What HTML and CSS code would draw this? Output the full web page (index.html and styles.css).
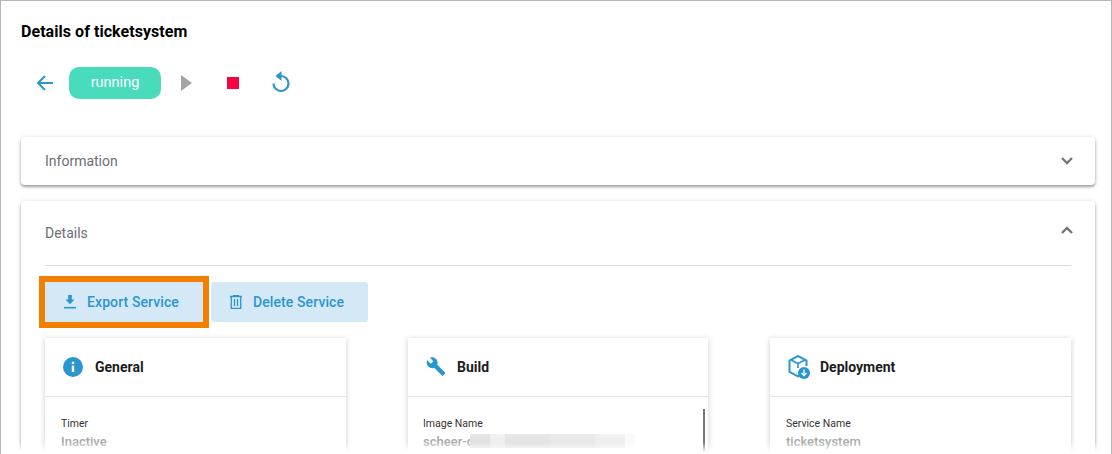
FILE: index.html
```html
<!DOCTYPE html>
<html lang="en">
<head>
<meta charset="utf-8">
<title>Details of ticketsystem</title>
<link rel="stylesheet" href="styles.css">
</head>
<body>
<div class="frame">
  <h1 class="title">Details of ticketsystem</h1>
  <div class="toolbar">
    <svg class="ic-back" viewBox="0 0 18 18" width="18" height="18"><path d="M17 9H2M9 2 2 9l7 7" fill="none" stroke="#2a96d0" stroke-width="2"/></svg>
    <span class="status">running</span>
    <svg class="ic-play" viewBox="0 0 11 16" width="11" height="16"><path d="M0 0l11 8-11 8z" fill="#a3a3a3"/></svg>
    <span class="ic-stop"></span>
    <svg class="ic-reload" viewBox="0 0 18 21" width="18" height="21"><path d="M9 5a7.500 7.500 0 1 1-7.500 7.500" fill="none" stroke="#2a96d0" stroke-width="2.200"/><path d="M9.500 0v10L3.500 5z" fill="#2a96d0"/></svg>
  </div>
  <section class="panel panel-info">
    <span class="panel-title">Information</span>
    <svg class="chev" viewBox="0 0 12 8" width="12" height="8"><path d="M1 1l5 5 5-5" fill="none" stroke="#757575" stroke-width="2.300"/></svg>
  </section>
  <section class="panel panel-details">
    <div class="details-head">
      <span class="panel-title">Details</span>
      <svg class="chev chev-up" viewBox="0 0 12 8" width="12" height="8"><path d="M1 7l5-5 5 5" fill="none" stroke="#757575" stroke-width="2.300"/></svg>
    </div>
    <div class="actions">
      <button class="btn btn-export">
        <svg viewBox="0 0 12 14" width="12" height="14"><path d="M4.200 0h3.600v4.500h2.700L6 9.300 1.500 4.500h2.700z" fill="#2a96d0"/><path d="M0 12.700h12" fill="none" stroke="#2a96d0" stroke-width="1.600"/></svg>
        Export Service
      </button>
      <button class="btn btn-delete">
        <svg viewBox="0 0 12 14" width="12" height="14"><path d="M0 1.500h12M3.500 1.500V.6h5v.9M1.300 1.500v11.800h9.400V1.500M4.500 4v7M7.500 4v7" fill="none" stroke="#2a96d0" stroke-width="1.300"/></svg>
        Delete Service
      </button>
    </div>
    <div class="cards">
      <article class="card card-general">
        <header class="card-head">
          <svg viewBox="0 0 20 20" width="20" height="20"><circle cx="10" cy="10" r="10" fill="#2a96d0"/><path d="M8.800 8.500h2.400v6.500H8.800zM8.800 4.800h2.400v2.300H8.800z" fill="#fff"/></svg>
          <h2 class="card-title">General</h2>
        </header>
        <div class="card-body">
          <div class="label">Timer</div>
          <div class="value">Inactive</div>
        </div>
      </article>
      <article class="card card-build">
        <header class="card-head">
          <svg viewBox="0 0 20 20" width="20" height="20"><path d="M19 15.500 11.300 7.800c.7-2 .3-4.300-1.300-5.900C8.300.2 5.800-.1 3.800.8l3.500 3.500-2.500 2.500L1.200 3.300C.200 5.300.600 7.800 2.300 9.500c1.600 1.600 3.900 2 5.900 1.300l7.700 7.700c.4.400 1 .4 1.400 0l1.700-1.700c.4-.4.400-1.100 0-1.300z" fill="#2a96d0"/></svg>
          <h2 class="card-title">Build</h2>
        </header>
        <div class="card-body">
          <div class="label">Image Name</div>
          <div class="value value-clip">scheer-c<span class="blur"><i class="b1"></i><i class="b2"></i><i class="b3"></i><i class="b4"></i><i class="b5"></i><i class="b6"></i></span></div>
          <span class="scroll"></span>
        </div>
      </article>
      <article class="card card-deploy">
        <header class="card-head">
          <svg viewBox="0 0 22 24" width="22" height="24"><path d="M10 8.500 2 4.500M10 8.500l8-4M10 8.500V13" fill="none" stroke="#2a96d0" stroke-width="1.700"/><path d="M12 20.500 10 21.500 1.500 17V5.500L10 1l8.500 4.500V11" fill="none" stroke="#2a96d0" stroke-width="2"/><circle cx="16" cy="18" r="6" fill="#2a96d0"/><path d="M16 14.500v6M13.500 18l2.500 2.500 2.500-2.500" fill="none" stroke="#fff" stroke-width="1.300"/></svg>
          <h2 class="card-title">Deployment</h2>
        </header>
        <div class="card-body">
          <div class="label">Service Name</div>
          <div class="value">ticketsystem</div>
        </div>
      </article>
    </div>
  </section>
  <div class="fade"></div>
</div>
</body>
</html>
```
FILE: styles.css
```css
* { box-sizing: border-box; }
html, body { margin: 0; height: 100%; overflow: hidden; background: #fff; }
body { font-family: Roboto, "Liberation Sans", sans-serif; }
.frame {
  position: relative;
  height: 454px;
  overflow: hidden;
  border: 1px solid #b5b5b5;
  border-bottom: 0;
  padding: 21px 16px 0 20px;
}
.fade {
  position: absolute; left: -1px; right: -1px; bottom: 0; height: 12px;
  background: linear-gradient(to bottom, rgba(255,255,255,0), #fff 85%);
}
.title { margin: 0; font-size: 16px; line-height: 19px; font-weight: 700; color: #000; letter-spacing: .05px; }
.toolbar { display: flex; align-items: center; height: 32px; margin-top: 26px; padding-left: 15px; }
.ic-back { margin-right: 15px; }
.status {
  width: 92px; height: 32px; border-radius: 10px; background: #48dbbc; color: #fff;
  font-size: 14.500px; line-height: 32px; text-align: center;
}
.ic-play { margin-left: 20px; }
.ic-stop { width: 12px; height: 12px; background: #ff0040; margin-left: 35px; }
.ic-reload { margin-left: 33px; margin-top: -3px; }
.panel {
  background: #fff; border-radius: 4px;
  box-shadow: 0 2px 3px rgba(0,0,0,.35), 0 0 5px rgba(0,0,0,.1);
}
.panel-info {
  height: 48px; margin-top: 38px; padding: 0 22px 0 24px;
  display: flex; align-items: center; justify-content: space-between;
}
.panel-title { font-size: 14px; line-height: 16px; color: #6d6d78; }
.panel-details { margin-top: 16px; height: 300px; padding: 0 24px; }
.details-head {
  height: 65px; border-bottom: 1px solid #dcdcdc;
  display: flex; justify-content: space-between; align-items: flex-start;
  padding-top: 24px;
}
.chev { display: block; }
.chev-up { margin-top: 1px; margin-right: -2px; }
.actions { display: flex; gap: 8px; margin-top: 16px; }
.btn {
  height: 40px; border: 0; border-radius: 3px; background: #d4e9f5; color: #2a96d0;
  font: 500 14px/16px Roboto, sans-serif; letter-spacing: .1px;
  display: flex; align-items: center; gap: 11px; padding: 0 0 0 19px;
}
.btn-export { width: 158px; border-radius: 0; outline: 6px solid #f27f00; }
.btn-delete { width: 157px; }
.cards { display: grid; grid-template-columns: 301px 300px 301px; justify-content: space-between; margin-top: 16px; }
.card { background: #fff; height: 120px; box-shadow: 0 1px 6px rgba(0,0,0,.2); }
.card-head {
  height: 59px; padding-left: 18px; border-bottom: 1px solid #e2e2e2;
  display: flex; align-items: center; gap: 12px;
}
.card-build .card-head { gap: 11px; }
.card-deploy .card-head { gap: 10px; }
.card-title { margin: 0; font-size: 14px; line-height: 16px; font-weight: 700; color: #1c1c1c; }
.card-body { position: relative; padding: 20px 16px 0; }
.card-build .card-body { padding-left: 15px; }
.label { font-size: 10.500px; line-height: 14px; color: #333; }
.value { font-size: 13px; line-height: 16px; margin-top: 3px; font-weight: 500; color: #a9a9a9; white-space: nowrap; }
.value-clip { position: relative; }
.blur { position: absolute; left: 47px; top: 0; height: 14px; display: flex; background: #fff; }
.blur i { display: block; height: 14px; }
.b1 { width: 20px; background: linear-gradient(#e6e6e6, #dcdcdc); }
.b2 { width: 15px; background: linear-gradient(#f2f2f2, #ebebeb); }
.b3 { width: 45px; background: linear-gradient(#e8e8e8, #dedede); }
.b4 { width: 45px; background: linear-gradient(#ececec, #e2e2e2); }
.b5 { width: 30px; background: linear-gradient(#f2f2f2, #e9e9e9); }
.b6 { width: 10px; background: #fafafa; }
.scroll { position: absolute; right: 3px; top: 12px; width: 2px; height: 50px; background: #777; }
```
